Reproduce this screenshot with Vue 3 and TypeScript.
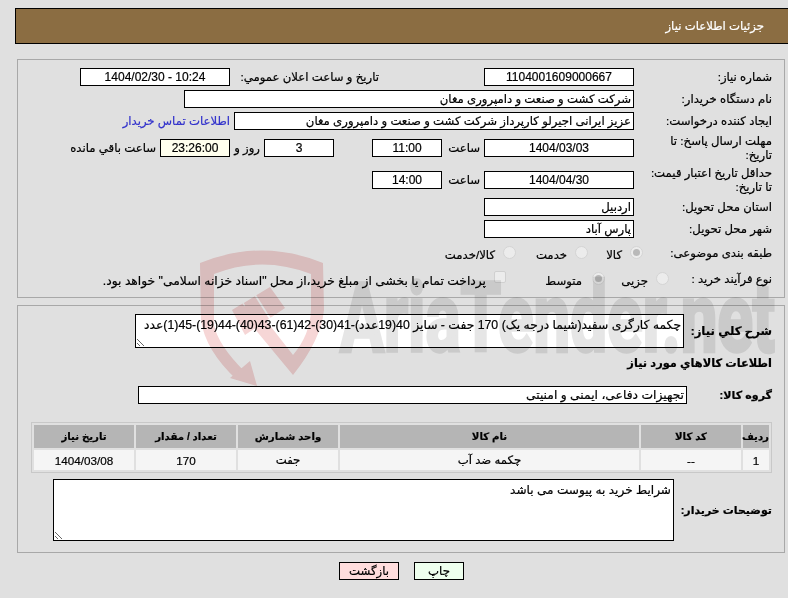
<script setup lang="ts">
const items = [{ id: 1, code: '--', name: 'چکمه ضد آب', unit: 'جفت', qty: '170', date: '1404/03/08' }]
const summary = 'چکمه کارگری سفید(شیما درجه یک) 170 جفت - سایز 40(19عدد)-41(30)-42(61)-43(40)-44(19)-45(1)عدد'
const notes = 'شرایط خرید به پیوست می باشد'
</script>

<template>
  <div class="page" dir="rtl">
    <header class="title"><span>جزئیات اطلاعات نیاز</span></header>

    <section class="panel first">
      <div class="row">
        <label class="lab">شماره نیاز:</label>
        <div class="box w150 center">1104001609000667</div>
        <span class="lab-mid">تاریخ و ساعت اعلان عمومي:</span>
        <div class="box w150 center" dir="ltr">1404/02/30 - 10:24</div>
      </div>
      <div class="row">
        <label class="lab">نام دستگاه خریدار:</label>
        <div class="box w450">شرکت کشت و صنعت و دامپروری مغان</div>
      </div>
      <div class="row">
        <label class="lab">ایجاد کننده درخواست:</label>
        <div class="box w400">عزیز ایرانی اجیرلو کارپرداز شرکت کشت و صنعت و دامپروری مغان</div>
        <a class="link">اطلاعات تماس خریدار</a>
      </div>
      <div class="row tall">
        <label class="lab">مهلت ارسال پاسخ: تا تاریخ:</label>
        <div class="box w150 center">1404/03/03</div>
        <span class="word hour">ساعت</span>
        <div class="box w70 center">11:00</div>
        <div class="box w70 center gap-l">3</div>
        <span class="word day">روز و</span>
        <div class="box w70 center cream">23:26:00</div>
        <span class="word left">ساعت باقي مانده</span>
      </div>
      <div class="row tall">
        <label class="lab">حداقل تاریخ اعتبار قیمت: تا تاریخ:</label>
        <div class="box w150 center">1404/04/30</div>
        <span class="word hour">ساعت</span>
        <div class="box w70 center">14:00</div>
      </div>
      <div class="row">
        <label class="lab">استان محل تحویل:</label>
        <div class="box w150">اردبیل</div>
      </div>
      <div class="row">
        <label class="lab">شهر محل تحویل:</label>
        <div class="box w150">پارس آباد</div>
      </div>
      <div class="row choice">
        <label class="lab wide">طبقه بندی موضوعی:</label>
        <span class="radio on"></span><span class="opt o1">کالا</span>
        <span class="radio"></span><span class="opt o2">خدمت</span>
        <span class="radio"></span><span class="opt">کالا/خدمت</span>
      </div>
      <div class="row choice">
        <label class="lab short">نوع فرآیند خرید :</label>
        <span class="radio"></span><span class="opt o3">جزیی</span>
        <span class="radio on"></span><span class="opt o4">متوسط</span>
        <span class="check"></span>
        <span class="opt long">پرداخت تمام یا بخشی از مبلغ خرید،از محل "اسناد خزانه اسلامی" خواهد بود.</span>
      </div>
    </section>

    <section class="panel second">
      <div class="row desc">
        <label class="lab bold narrow">شرح كلي نياز:</label>
        <textarea class="area area-top" readonly wrap="off" :value="summary"></textarea>
      </div>
      <h3 class="sub">اطلاعات كالاهاي مورد نياز</h3>
      <div class="row group">
        <label class="lab bold narrow2">گروه کالا:</label>
        <div class="box w549">تجهیزات دفاعی، ایمنی و امنیتی</div>
      </div>
      <table class="grid">
        <thead>
          <tr>
            <th class="c1">ردیف</th>
            <th class="c2">کد کالا</th>
            <th>نام کالا</th>
            <th class="c2">واحد شمارش</th>
            <th class="c2">تعداد / مقدار</th>
            <th class="c2">تاریخ نیاز</th>
          </tr>
        </thead>
        <tbody>
          <tr v-for="item in items" :key="item.id">
            <td>{{ item.id }}</td>
            <td>{{ item.code }}</td>
            <td>{{ item.name }}</td>
            <td>{{ item.unit }}</td>
            <td>{{ item.qty }}</td>
            <td>{{ item.date }}</td>
          </tr>
        </tbody>
      </table>
      <div class="row notes">
        <label class="lab bold narrow3">توضیحات خریدار:</label>
        <textarea class="area area-notes" readonly :value="notes"></textarea>
      </div>
    </section>

    <footer class="actions">
      <button class="btn print" type="button">چاپ</button>
      <button class="btn back" type="button">بازگشت</button>
    </footer>

    <div class="mark" aria-hidden="true">
      <svg class="shield" viewBox="190 240 150 146" width="150" height="146">
        <path
          class="shield-shape"
          d="M200 263 Q262 238 323 263 L324 310 Q321 340 293 375 L240 311 L250 300 L293 355 Q310 335 311 310 L311 274 Q262 255 214 274 L214 325 Q218 345 245 372 L237 380 Q205 350 201 320 Z"
        />
        <path class="shield-shape" d="M250 361 L257 386 L230 378 Z" />
        <path class="shield-shape" d="M232 310 L242.6 303.6 L256.2 327.4 L245 335 Z" />
        <path class="shield-shape" d="M243.8 302.9 L254.8 296.2 L269 318.8 L257.4 326.6 Z" />
        <path class="shield-shape" d="M256.3 295.3 L270 287 L285 308 L270.6 317.7 Z" />
      </svg>
      <span class="mark-text">AriaTender.net</span>
    </div>
  </div>
</template>

<style>
html, body { margin: 0; background: #e0e0e0; }
</style>

<style scoped>
.page {
  position: relative;
  width: 788px;
  height: 598px;
  box-sizing: border-box;
  padding: 8px 0 0 15px;
  background: #e0e0e0;
  color: #000;
  font-family: "Liberation Sans", "DejaVu Sans", sans-serif;
  font-size: 11.7px;
  -webkit-text-stroke: 0.2px currentColor;
  overflow: hidden;
}
.mark {
  position: absolute;
  left: 0;
  top: 0;
  width: 788px;
  height: 386px;
  overflow: hidden;
  pointer-events: none;
  mix-blend-mode: multiply;
  z-index: 5;
}
.shield { position: absolute; left: 190px; top: 240px; }
.shield-shape { fill: #f6d6d6; }
.mark-text {
  position: absolute;
  left: 340px;
  top: 268px;
  direction: ltr;
  font-family: Roboto, sans-serif;
  font-weight: 700;
  font-size: 96px;
  line-height: 100px;
  color: #e6e6e6;
  -webkit-text-stroke: 3.5px #e6e6e6;
  transform: scaleX(0.683);
  transform-origin: left center;
  white-space: nowrap;
}
.title {
  position: relative;
  height: 34px;
  border: 1px solid #000;
  border-right: 0;
  background: #8b6d42;
  color: #fff;
  display: flex;
  align-items: center;
  padding-right: 24px;
}
.panel {
  position: relative;
  box-sizing: border-box;
  margin: 0 3px 0 0;
  margin-left: 2px;
  border: 1px solid #fff;
  outline: 1px solid #a8a8a8;
  outline-offset: -1px;
  padding-right: 12px;
}
.first { height: 239px; margin-top: 15px; padding-top: 8px; }
.second { height: 248px; margin-top: 7px; padding-top: 8px; }
.row { display: flex; align-items: center; min-height: 18px; margin-bottom: 4px; }
.tall { min-height: 28px; }
.choice { min-height: 22px; }
.lab { width: 130px; flex: none; margin-left: 8px; line-height: 14px; }
.lab.wide { width: 129px; margin-left: 0; white-space: nowrap; }
.lab.short { width: 103px; margin-left: 0; white-space: nowrap; }
.bold { font-weight: 700; white-space: nowrap; }
.narrow { width: 80px; margin-left: 8px; font-size: 11.7px; }
.narrow2 { width: 77px; margin-left: 8px; font-size: 11.1px; }
.narrow3 { width: 90px; margin-left: 8px; font-size: 11px; }
.box {
  box-sizing: border-box;
  height: 18px;
  line-height: 16px;
  border: 1px solid #000;
  background: #fff;
  padding: 0 2px;
  white-space: nowrap;
  overflow: hidden;
  flex: none;
}
.center { text-align: center; font-size: 12px; }
.cream { background: #ffffee; }
.w150 { width: 150px; }
.w70 { width: 70px; }
.w400 { width: 400px; }
.w450 { width: 450px; }
.w549 { width: 549px; font-size: 12.3px; }
.gap-l { margin-right: 38px; }
.lab-mid { width: 254px; flex: none; padding-right: 105px; box-sizing: border-box; white-space: nowrap; }
.word { white-space: nowrap; flex: none; box-sizing: border-box; }
.hour { width: 42px; padding-right: 4px; }
.day { width: 34px; padding-right: 4px; }
.left { padding-right: 4px; }
.link { color: #3333cc; margin-right: 4px; white-space: nowrap; }
.radio {
  box-sizing: border-box;
  width: 13px;
  height: 13px;
  flex: none;
  border-radius: 50%;
  background: #ececec;
  border: 1px solid #d4d4d4;
  margin: -1px 0 0 8px;
  position: relative;
}
.radio.on::after {
  content: "";
  position: absolute;
  inset: 2px;
  border-radius: 50%;
  background: #b9b9b9;
}
.check {
  box-sizing: border-box;
  width: 12px;
  height: 12px;
  flex: none;
  border: 1px solid #d0d0d0;
  border-radius: 2px;
  background: #ececec;
  margin: -4px 0 0 8px;
}
.opt { white-space: nowrap; flex: none; margin-top: 3px; }
.long { font-size: 12.3px; }
.o1 { width: 34px; }
.o2 { width: 51px; }
.o3 { width: 43px; }
.o4 { width: 76px; margin-right: 2px; }
.area {
  box-sizing: border-box;
  display: block;
  border: 1px solid #000;
  background: #fff;
  padding: 3px 2px;
  margin: 0;
  font: inherit;
  color: #000;
  flex: none;
  outline: none;
  overflow: hidden;
  resize: both;
}
.area-top { width: 549px; height: 34px; font-size: 12.3px; }
.area-notes { width: 621px; height: 62px; font-size: 12.1px; }
.desc { margin-bottom: 0; }
.sub { margin: 8px 0 0; height: 18px; line-height: 14px; font-size: 11.4px; font-weight: 700; }
.group { margin: 12px 0 0; }
.grid {
  width: 741px;
  margin-top: 18px;
  border-collapse: separate;
  border-spacing: 2px;
  border: 1px solid #c8c8c8;
  table-layout: fixed;
  text-align: center;
}
.grid th { height: 23px; padding: 0; background: #b5b5b5; font-size: 10.2px; white-space: nowrap; }
.grid td { height: 20px; padding: 0; background: #f5f5f5; }
.c1 { width: 26px; }
.c2 { width: 100px; }
.notes { margin-top: 6px; }
.actions { display: flex; justify-content: center; gap: 15px; margin-top: 9px; }
.btn {
  box-sizing: border-box;
  height: 18px;
  padding: 0;
  border: 1px solid #000;
  font: inherit;
  color: #000;
}
.print { width: 50px; background: #eeffee; }
.back { width: 60px; background: #ffdddd; }
</style>
